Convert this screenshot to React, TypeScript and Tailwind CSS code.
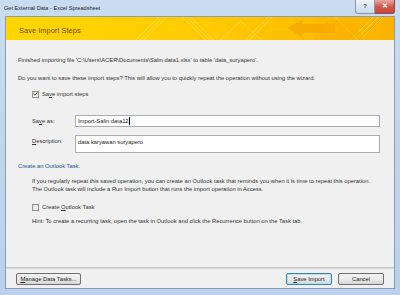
const font = "font-['Liberation_Sans',Arial,sans-serif]";

const Checkbox = ({ checked }: { checked?: boolean }) => (
  <span className="w-[7px] h-[7px] border border-[#8e8f8f] bg-gradient-to-br from-[#dcdcdc] to-[#ffffff] flex items-center justify-center">
    {checked && (
      <svg viewBox="0 0 7 7" className="w-[6px] h-[6px]">
        <path d="M1 3.5 L2.8 5.3 L6 1.2" fill="none" stroke="#333" strokeWidth="1.2" />
      </svg>
    )}
  </span>
);

const Btn = ({ children, w, focus }: { children: React.ReactNode; w: string; focus?: boolean }) => (
  <div
    className={`${w} h-[12px] rounded-[2px] border ${focus ? "border-[#3c7fb1] shadow-[inset_0_0_0_1px_#b5e3f8]" : "border-[#707070]"} bg-gradient-to-b from-[#f2f2f2] via-[#ebebeb] to-[#d5d5d5] flex items-center justify-center text-[5.8px] text-[#222]`}
  >
    {children}
  </div>
);

// decorative stripes over the yellow band
const HeaderArt = () => (
  <svg className="absolute inset-0 w-full h-full" viewBox="0 0 389 23" preserveAspectRatio="none">
    <g stroke="#ffe680" strokeWidth="0.6" fill="none" opacity="0.8">
      <path d="M130 23 L153 0 M134 23 L157 0 M138 23 L161 0" />
      <path d="M200 23 L177 0 M204 23 L181 0 M208 23 L185 0" />
      <path d="M240 23 L263 0 M244 23 L267 0" />
      <path d="M215 23 L235 4 L256 23" />
      <path d="M345 23 L368 0 M350 23 L373 0 M355 23 L378 0" />
      <path d="M330 0 L353 23" />
    </g>
    <path d="M282 11 L297 3 L297 7 L330 7 L330 16 L297 16 L297 20 Z" fill="#f4a000" opacity="0.6" />
    <path d="M322 4 L346 4 L360 23 L308 23 Z" fill="#f9ae00" opacity="0.5" />
  </svg>
);

export default function App() {
  return (
    <div className={`${font} w-[400px] h-[295px] bg-gradient-to-b from-[#c9dcf1] to-[#b9d1ea] flex flex-col overflow-hidden`}>
      {/* title bar */}
      <div className="h-[15px] flex items-start justify-between pl-[4px] pr-[5px]">
        <span className="text-[5.6px] text-[#1e1e1e] mt-[4px]">Get External Data - Excel Spreadsheet</span>
        <div className="flex">
          <div className="w-[20px] h-[14px] border border-[#8797ab] border-t-0 rounded-bl-[3px] bg-gradient-to-b from-[#eef3f9] to-[#cad9ea] flex items-center justify-center text-[6px] font-bold text-[#555]">
            ?
          </div>
          <div className="w-[20px] h-[14px] border border-[#8e4b45] border-t-0 border-l-0 rounded-br-[3px] bg-gradient-to-b from-[#e9a99f] via-[#d0584c] to-[#c9473b] flex items-center justify-center text-[7px] font-bold text-white">
            ✕
          </div>
        </div>
      </div>

      {/* client area */}
      <div className="mx-[5px] mt-[1px] h-[273px] border border-[#8b9bb0] bg-[#f0f0f0] flex flex-col">
        <div className="relative h-[23px] shrink-0 bg-gradient-to-r from-[#ffd600] via-[#ffcb00] to-[#fbb200]">
          <HeaderArt />
          <span className="relative block pl-[13px] pt-[8px] text-[7.5px] text-[#7a4a00]">Save Import Steps</span>
        </div>

        <div className="flex-1 flex flex-col text-[5.8px] text-[#333] pl-[12px] pr-[14px]">
          <div className="h-[8px] mt-[16px] flex items-center">
            Finished importing file 'C:\Users\ACER\Documents\Salin data1.xlsx' to table 'data_suryapero'.
          </div>
          <div className="h-[8px] mt-[10px] flex items-center">
            Do you want to save these import steps? This will allow you to quickly repeat the operation without using the wizard.
          </div>
          <div className="h-[8px] mt-[8px] flex items-center gap-[3px] pl-[14px]">
            <Checkbox checked />
            <span>
              Sa<span className="underline">v</span>e import steps
            </span>
          </div>

          <div className="mt-[17px] flex items-center pl-[14px]">
            <span className="w-[43px]">
              Sa<span className="underline">v</span>e as:
            </span>
            <div className="flex-1 h-[12px] bg-white border border-[#abadb3] flex items-center pl-[2px] text-[#222]">
              Import-Salin data12
              <span className="w-px h-[8px] bg-black" />
            </div>
          </div>

          <div className="mt-[8px] flex items-start pl-[14px]">
            <span className="w-[43px] pt-[2px]">
              <span className="underline">D</span>escription:
            </span>
            <div className="flex-1 h-[18px] bg-white border border-[#abadb3] pl-[2px] pt-[2px] text-[#222]">
              data karyawan suryapero
            </div>
          </div>

          <div className="h-[8px] mt-[9px] flex items-center text-[#1f4f95]">Create an Outlook Task.</div>

          <div className="mt-[7px] pl-[14px] leading-[8px]">
            <div>If you regularly repeat this saved operation, you can create an Outlook task that reminds you when it is time to repeat this operation.</div>
            <div>The Outlook task will include a Run Import button that runs the import operation in Access.</div>
          </div>

          <div className="h-[8px] mt-[10px] flex items-center gap-[3px] pl-[14px]">
            <Checkbox />
            <span>
              Create <span className="underline">O</span>utlook Task
            </span>
          </div>

          <div className="h-[8px] mt-[6px] flex items-center pl-[14px]">
            Hint: To create a recurring task, open the task in Outlook and click the Recurrence button on the Task tab.
          </div>
        </div>

        <div className="border-t border-[#d8d8d8] shadow-[0_-1px_0_#c9c9c9] h-[20px] shrink-0 flex items-start pt-[4px] pl-[10px] pr-[10px]">
          <Btn w="w-[65px]">
            <span>
              <span className="underline">M</span>anage Data Tasks...
            </span>
          </Btn>
          <div className="flex-1" />
          <Btn w="w-[46px]" focus>
            <span>
              <span className="underline">S</span>ave Import
            </span>
          </Btn>
          <div className="w-[6px]" />
          <Btn w="w-[46px]">Cancel</Btn>
        </div>
      </div>
    </div>
  );
}
